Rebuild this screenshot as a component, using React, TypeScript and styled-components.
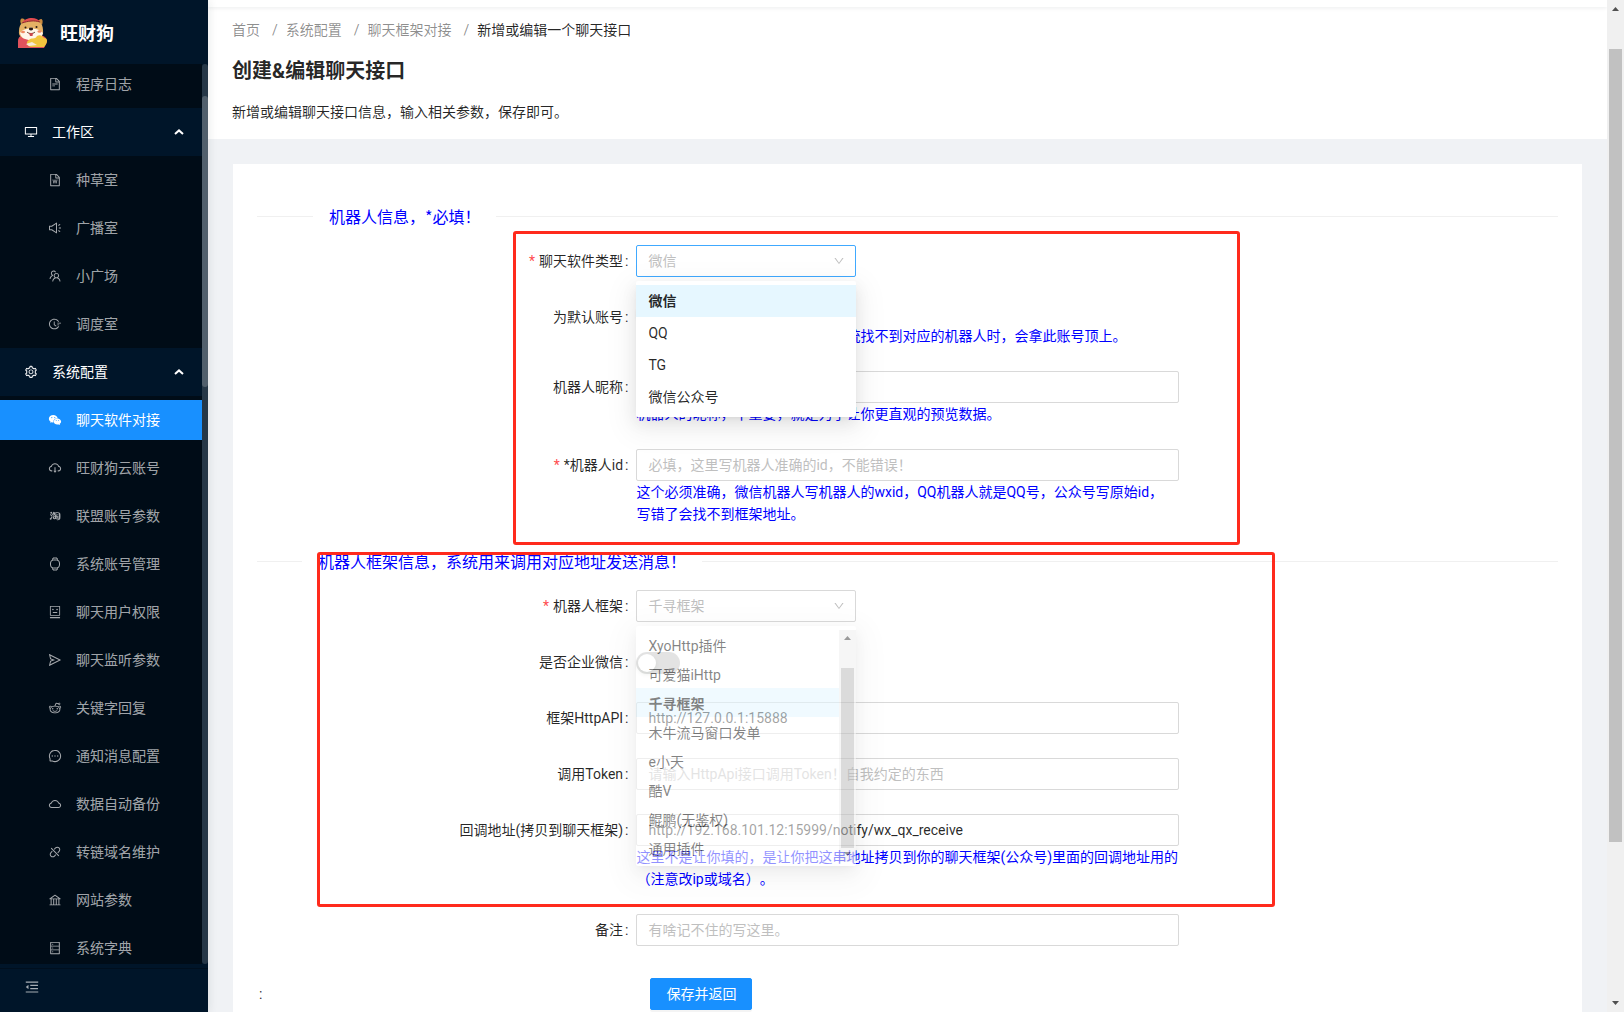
import React from 'react';
import styled, { createGlobalStyle, css } from 'styled-components';
import {
  AiFillWechat,
  AiOutlineBank,
  AiOutlineCloud,
  AiOutlineCloudDownload,
  AiOutlineDatabase,
  AiOutlineDesktop,
  AiOutlineDisconnect,
  AiOutlineDown,
  AiOutlineFieldTime,
  AiOutlineFileText,
  AiOutlineFileWord,
  AiOutlineMenuFold,
  AiOutlineMessage,
  AiOutlineReddit,
  AiOutlineRobot,
  AiOutlineSend,
  AiOutlineSetting,
  AiOutlineSound,
  AiOutlineTaobao,
  AiOutlineTeam,
} from 'react-icons/ai';

const headingFont = '"Noto Sans CJK SC", sans-serif';

const GlobalStyle = createGlobalStyle`
  *, *::before, *::after { box-sizing: border-box; }
  body {
    margin: 0;
    background: #f0f2f5;
    color: rgba(0, 0, 0, 0.85);
    font-family: Roboto, "Noto Sans CJK SC", sans-serif;
    font-size: 14px;
    line-height: 22px;
    text-spacing-trim: space-all;
  }
  button, input, select { font: inherit; }
  h1, p, ul, ol { margin: 0; padding: 0; }
  ul, ol { list-style: none; }
`;

const Shell = styled.div`
  display: flex;
  height: 100vh;
  overflow: hidden;
`;

/* ---------- sidebar ---------- */

const Sider = styled.aside`
  position: relative;
  z-index: 10;
  flex: none;
  display: flex;
  flex-direction: column;
  width: 208px;
  background: #001529;
  box-shadow: 2px 0 8px rgba(29, 35, 41, 0.08);
`;

const Brand = styled.a`
  flex: none;
  display: flex;
  align-items: center;
  gap: 12px;
  height: 64px;
  padding-left: 17px;
  color: #fff;
  font-family: ${headingFont};
  font-size: 18px;
  font-weight: 700;
  text-decoration: none;
`;

const MenuArea = styled.div`
  flex: 1;
  min-height: 0;
  display: flex;
`;

const MenuNav = styled.nav`
  flex: 1;
  overflow: hidden;
  background: #000c17;
`;

const MenuTrack = styled.div`
  width: 6px;
  padding-top: 32px;
  border-radius: 3px;
  background: #263747;
`;

const MenuThumb = styled.div`
  height: 291px;
  border-radius: 3px;
  background: #515f6c;
`;

const GroupButton = styled.button`
  display: flex;
  align-items: center;
  gap: 14px;
  width: 100%;
  height: 48px;
  padding: 0 18px 0 24px;
  border: 0;
  background: #001529;
  color: #fff;
  text-align: left;
  span { flex: 1; }
`;

const MenuList = styled.ul<{ $first?: boolean }>`
  display: flex;
  flex-direction: column;
  gap: 8px;
  padding: ${(p) => (p.$first ? '0' : '4px')} 0 4px;
`;

const MenuLink = styled.a<{ $active?: boolean }>`
  display: flex;
  align-items: center;
  gap: 14px;
  height: 40px;
  padding-left: 48px;
  text-decoration: none;
  color: rgba(255, 255, 255, 0.65);
  ${(p) => p.$active && css`
    background: #1890ff;
    color: #fff;
  `}
`;

const SiderFooter = styled.div`
  flex: none;
  height: 48px;
  padding-top: 4px;
`;

const FoldButton = styled.button`
  display: flex;
  align-items: center;
  width: 100%;
  height: 44px;
  padding: 0 24px 8px;
  border: 0;
  border-top: 1px solid #000f1e;
  background: transparent;
  color: rgba(255, 255, 255, 0.65);
  font-size: 16px;
`;

/* ---------- page ---------- */

const Main = styled.main`
  flex: 1;
  min-width: 0;
  overflow: hidden;
`;

const TopBar = styled.div`
  position: relative;
  height: 7px;
  background: #fff;
  box-shadow: 0 1px 4px rgba(0, 21, 41, 0.08);
`;

const PageHeader = styled.header`
  padding: 12px 24px 16px;
  background: #fff;
`;

const Crumbs = styled.ol`
  display: flex;
  color: rgba(0, 0, 0, 0.45);
  li + li::before {
    content: '/';
    margin: 0 8px 0 12px;
  }
  a { color: inherit; text-decoration: none; }
  li:last-child span { color: rgba(0, 0, 0, 0.85); }
`;

const Title = styled.h1`
  margin: 14px 0;
  font-size: 20px;
  line-height: 32px;
  font-weight: 700;
`;

const Card = styled.form`
  position: relative;
  margin: 25px 25px 0;
  padding: 24px;
  background: #fff;
`;

const SectionTitle = styled.div<{ $lead: number }>`
  display: flex;
  align-items: center;
  gap: 16px;
  margin: 16px 0;
  color: #0000ff;
  font-family: ${headingFont};
  font-size: 16px;
  line-height: 25px;
  &::before, &::after {
    content: '';
    height: 1px;
    background: #f0f0f0;
  }
  &::before { width: ${(p) => p.$lead}px; }
  &::after { flex: 1; }
`;

const Row = styled.div`
  display: grid;
  grid-template-columns: minmax(0, 7fr) minmax(0, 10fr) minmax(0, 7fr);
  margin-bottom: 24px;
`;

const Rows = styled.div`
  display: flow-root;
  & + ${SectionTitle} { margin-top: 0; }
`;

const Label = styled.label<{ $required?: boolean }>`
  display: block;
  height: 32px;
  padding-right: 8px;
  line-height: 32px;
  text-align: right;
  white-space: nowrap;
  &::after { content: ':'; margin-left: 2px; }
  ${(p) => p.$required && css`
    &::before {
      content: '*';
      margin-right: 4px;
      color: #ff4d4f;
    }
  `}
`;

const Control = styled.div<{ $width?: string }>`
  position: relative;
  width: ${(p) => p.$width ?? '100%'};
`;

const TextInput = styled.input`
  display: block;
  width: 100%;
  height: 32px;
  padding: 4px 11px;
  border: 1px solid #d9d9d9;
  border-radius: 2px;
  outline: 0;
  background: #fff;
  color: rgba(0, 0, 0, 0.85);
  &::placeholder { color: #bfbfbf; opacity: 1; }
`;

const SelectBox = styled.select<{ $focused?: boolean }>`
  display: block;
  width: 100%;
  height: 32px;
  padding: 0 11px;
  appearance: none;
  border: 1px solid ${(p) => (p.$focused ? '#40a9ff' : '#d9d9d9')};
  border-radius: 2px;
  outline: 0;
  background: #fff;
  color: #bfbfbf;
`;

const Caret = styled(AiOutlineDown)`
  position: absolute;
  top: 10px;
  right: 11px;
  color: #bfbfbf;
  font-size: 12px;
  pointer-events: none;
`;

const Help = styled.p`
  color: #0000ff;
`;

const SwitchLine = styled.div<{ $compact?: boolean }>`
  display: flex;
  align-items: center;
  height: ${(p) => (p.$compact ? '24px' : '34px')};
  margin-bottom: ${(p) => (p.$compact ? '0' : '-2px')};
`;

const Switch = styled.input`
  appearance: none;
  display: flex;
  align-items: center;
  width: 44px;
  height: 22px;
  margin: 0;
  padding: 2px;
  border-radius: 11px;
  background: rgba(0, 0, 0, 0.25);
  &::before {
    content: '';
    width: 18px;
    height: 18px;
    border-radius: 9px;
    background: #fff;
    box-shadow: 0 2px 4px rgba(0, 35, 11, 0.2);
  }
`;

const Popup = styled.div<{ $fading?: boolean }>`
  position: absolute;
  z-index: 5;
  top: 36px;
  left: 0;
  display: flex;
  width: 100%;
  padding: 4px 0;
  border-radius: 2px;
  background: #fff;
  opacity: ${(p) => (p.$fading ? 0.57 : 1)};
  box-shadow: 0 3px 6px -4px rgba(0, 0, 0, 0.12), 0 6px 16px 0 rgba(0, 0, 0, 0.08),
    0 9px 28px 8px rgba(0, 0, 0, 0.05);
`;

const OptionList = styled.ul`
  flex: 1;
`;

const OptionItem = styled.li<{ $dense?: boolean }>`
  height: ${(p) => (p.$dense ? '29px' : '32px')};
  padding: 0 12px;
  line-height: 32px;
  &[aria-selected='true'] {
    background: #e6f7ff;
    font-weight: 700;
  }
`;

const ScrollTrack = styled.div<{ $pad: number }>`
  flex: none;
  display: flex;
  flex-direction: column;
  justify-content: space-between;
  align-items: center;
  width: 17px;
  padding: ${(p) => p.$pad}px 0;
  background: #f0f0f0;
`;

const ScrollThumb = styled.div<{ $before: number; $after: number }>`
  flex: 1;
  width: 13px;
  margin: ${(p) => p.$before}px 0 ${(p) => p.$after}px;
  background: #c1c1c1;
`;

const SubmitRow = styled.div`
  display: grid;
  grid-template-columns: minmax(0, 7fr) minmax(0, 17fr);
  align-items: center;
  padding: 8px 0 24px;
`;

const SubmitLabel = styled.span`
  padding-left: 2px;
`;

const SubmitButton = styled.button`
  height: 32px;
  margin-left: 14px;
  padding: 0 15px;
  border: 1px solid #1890ff;
  border-radius: 2px;
  background: #1890ff;
  color: #fff;
  box-shadow: 0 2px 0 rgba(0, 0, 0, 0.045);
`;

const Marker = styled.div<{ $x: number; $y: number; $w: number; $h: number }>`
  position: absolute;
  z-index: 6;
  left: ${(p) => p.$x}px;
  top: ${(p) => p.$y}px;
  width: ${(p) => p.$w}px;
  height: ${(p) => p.$h}px;
  border: 3px solid #ff2a1c;
  border-radius: 3px;
  pointer-events: none;
`;

/* ---------- drawings ---------- */

const DogLogo = () => (
  <svg width="31" height="33" viewBox="0 0 31 33" aria-hidden="true">
    <path d="M4 8 C2 3 5 1 8 4 Z M21 5 C24 1 27 3 25 9 Z" fill="#c98a3f" />
    <path d="M1 32 V25 C1 21 4 19 8 19 H22 C27 19 30 22 30 26 L27 32 Z" fill="#e0525c" />
    <path d="M2 15 C2 7 8 3 14 3 C21 3 26 7 26 14 C27 20 22 23 14 23 C6 23 1 21 2 15 Z" fill="#e5b164" />
    <path d="M3 17 C6 12 11 14 14 11 C17 14 22 12 26 17 C25 22 20 24 14 24 C8 24 4 22 3 17 Z" fill="#fff6ea" />
    <path d="M5 7 C8 1 20 0 23 6 C17 4 11 5 5 7 Z" fill="#e24b50" />
    <path d="M5 7 C11 5 17 4 23 6" fill="none" stroke="#8d2d2d" strokeWidth="1" />
    <circle cx="8.5" cy="11.5" r="1" fill="#2b1a14" />
    <circle cx="19.5" cy="11" r="1" fill="#2b1a14" />
    <ellipse cx="6" cy="16" rx="2" ry="1.2" fill="#f08a63" />
    <ellipse cx="22.5" cy="15.5" rx="2" ry="1.2" fill="#f08a63" />
    <ellipse cx="14" cy="13" rx="2.2" ry="1.4" fill="#2b1a14" />
    <path d="M10 16 C12 18 16 18 18 16" fill="none" stroke="#5a3a2a" strokeWidth="1" />
    <path d="M12 17 H16 L15.5 20 H13 Z" fill="#c9484c" />
    <path d="M12 24 C14 21 18 24 20 20 C23 18 26 20 27 22 C32 22 30 28 27 31 H14 C9 30 9 25 12 24 Z" fill="#f2c53d" />
    <path d="M9 28 L15 26 L20 29 L12 30 Z" fill="#f7ead8" />
  </svg>
);

const WatchIcon = () => (
  <svg width="14" height="14" viewBox="0 0 14 14" fill="none" stroke="currentColor" aria-hidden="true">
    <rect x="2.5" y="3" width="9" height="8" rx="3" />
    <path d="M4.5 2.8 L5 1 H9 L9.5 2.8 M4.5 11.2 L5 13 H9 L9.5 11.2" />
  </svg>
);

const ChevronUp = () => (
  <svg width="10" height="6" viewBox="0 0 10 6" fill="none" stroke="currentColor" strokeWidth="2" aria-hidden="true">
    <path d="M1 5 L5 1.4 L9 5" />
  </svg>
);

const ScrollArrow = ({ down }: { down?: boolean }) => (
  <svg width="7" height="4" viewBox="0 0 7 4" fill="#505050" aria-hidden="true">
    <path d={down ? 'M0 0 H7 L3.5 4 Z' : 'M0 4 H7 L3.5 0 Z'} />
  </svg>
);

/* ---------- data ---------- */

type Entry = { text: string; icon: React.ReactNode; active?: boolean };

const workEntries: Entry[] = [
  { text: '种草室', icon: <AiOutlineFileWord /> },
  { text: '广播室', icon: <AiOutlineSound /> },
  { text: '小广场', icon: <AiOutlineTeam /> },
  { text: '调度室', icon: <AiOutlineFieldTime /> },
];

const configEntries: Entry[] = [
  { text: '聊天软件对接', icon: <AiFillWechat />, active: true },
  { text: '旺财狗云账号', icon: <AiOutlineCloudDownload /> },
  { text: '联盟账号参数', icon: <AiOutlineTaobao /> },
  { text: '系统账号管理', icon: <WatchIcon /> },
  { text: '聊天用户权限', icon: <AiOutlineRobot /> },
  { text: '聊天监听参数', icon: <AiOutlineSend /> },
  { text: '关键字回复', icon: <AiOutlineReddit /> },
  { text: '通知消息配置', icon: <AiOutlineMessage /> },
  { text: '数据自动备份', icon: <AiOutlineCloud /> },
  { text: '转链域名维护', icon: <AiOutlineDisconnect /> },
  { text: '网站参数', icon: <AiOutlineBank /> },
  { text: '系统字典', icon: <AiOutlineDatabase /> },
];

const chatTypes = ['微信', 'QQ', 'TG', '微信公众号'];

const frameworks = [
  'XyoHttp插件',
  '可爱猫iHttp',
  '千寻框架',
  '木牛流马窗口发单',
  'e小天',
  '酷V',
  '鲲鹏(无鉴权)',
  '通用插件',
];

const Entries = ({ items, first }: { items: Entry[]; first?: boolean }) => (
  <MenuList $first={first}>
    {items.map((item) => (
      <li key={item.text}>
        <MenuLink href="#" $active={item.active}>
          {item.icon}
          {item.text}
        </MenuLink>
      </li>
    ))}
  </MenuList>
);

type PickerProps = { id: string; options: string[]; value: string; focused?: boolean; fading?: boolean };

const Picker = ({ id, options, value, focused, fading }: PickerProps) => (
  <Control $width="220px">
    <SelectBox id={id} defaultValue={value} $focused={focused}>
      {options.map((o) => (
        <option key={o}>{o}</option>
      ))}
    </SelectBox>
    <Caret />
    <Popup $fading={fading}>
      <OptionList role="listbox">
        {options.map((o) => (
          <OptionItem key={o} role="option" aria-selected={o === value} $dense={fading}>
            {o}
          </OptionItem>
        ))}
      </OptionList>
      {fading && (
        <ScrollTrack $pad={6}>
          <ScrollArrow />
          <ScrollThumb $before={28} $after={4} />
          <ScrollArrow down />
        </ScrollTrack>
      )}
    </Popup>
  </Control>
);

export default function App() {
  return (
    <>
      <GlobalStyle />
      <Shell>
        <Sider>
          <Brand href="#">
            <DogLogo />
            旺财狗
          </Brand>
          <MenuArea>
            <MenuNav>
              <Entries first items={[{ text: '程序日志', icon: <AiOutlineFileText /> }]} />
              <GroupButton type="button">
                <AiOutlineDesktop />
                <span>工作区</span>
                <ChevronUp />
              </GroupButton>
              <Entries items={workEntries} />
              <GroupButton type="button">
                <AiOutlineSetting />
                <span>系统配置</span>
                <ChevronUp />
              </GroupButton>
              <Entries items={configEntries} />
            </MenuNav>
            <MenuTrack>
              <MenuThumb />
            </MenuTrack>
          </MenuArea>
          <SiderFooter>
            <FoldButton type="button" aria-label="收起菜单">
              <AiOutlineMenuFold />
            </FoldButton>
          </SiderFooter>
        </Sider>

        <Main>
          <TopBar />
          <PageHeader>
            <Crumbs>
              <li><a href="#">首页</a></li>
              <li><a href="#">系统配置</a></li>
              <li><a href="#">聊天框架对接</a></li>
              <li><span>新增或编辑一个聊天接口</span></li>
            </Crumbs>
            <Title>创建&amp;编辑聊天接口</Title>
            <p>新增或编辑聊天接口信息，输入相关参数，保存即可。</p>
          </PageHeader>

          <Card onSubmit={(e) => e.preventDefault()}>
            <SectionTitle $lead={56}>机器人信息，*必填！</SectionTitle>
            <Rows>
              <Row>
                <Label htmlFor="type" $required>聊天软件类型</Label>
                <Picker id="type" options={chatTypes} value="微信" focused />
              </Row>
              <Row>
                <Label htmlFor="fallback">为默认账号</Label>
                <Control>
                  <SwitchLine $compact>
                    <Switch type="checkbox" role="switch" id="fallback" />
                  </SwitchLine>
                  <Help>是否设置为默认账号，如果当前系统找不到对应的机器人时，会拿此账号顶上。</Help>
                </Control>
              </Row>
              <Row>
                <Label htmlFor="nick">机器人昵称</Label>
                <Control>
                  <TextInput id="nick" />
                  <Help>机器人的昵称，不重要，就是为了让你更直观的预览数据。</Help>
                </Control>
              </Row>
              <Row>
                <Label htmlFor="robot" $required>*机器人id</Label>
                <Control>
                  <TextInput id="robot" placeholder="必填，这里写机器人准确的id，不能错误！" />
                  <Help>
                    这个必须准确，微信机器人写机器人的wxid，QQ机器人就是QQ号，公众号写原始id，
                    <br />
                    写错了会找不到框架地址。
                  </Help>
                </Control>
              </Row>
            </Rows>

            <SectionTitle $lead={45}>机器人框架信息，系统用来调用对应地址发送消息！</SectionTitle>
            <Rows>
              <Row>
                <Label htmlFor="framework" $required>机器人框架</Label>
                <Picker id="framework" options={frameworks} value="千寻框架" fading />
              </Row>
              <Row>
                <Label htmlFor="corp">是否企业微信</Label>
                <Control>
                  <SwitchLine>
                    <Switch type="checkbox" role="switch" id="corp" />
                  </SwitchLine>
                </Control>
              </Row>
              <Row>
                <Label htmlFor="api">框架HttpAPI</Label>
                <TextInput id="api" defaultValue="http://127.0.0.1:15888" />
              </Row>
              <Row>
                <Label htmlFor="token">调用Token</Label>
                <TextInput id="token" placeholder="请输入HttpApi接口调用Token！自我约定的东西" />
              </Row>
              <Row>
                <Label htmlFor="callback">回调地址(拷贝到聊天框架)</Label>
                <Control>
                  <TextInput id="callback" defaultValue="http://192.168.101.12:15999/notify/wx_qx_receive" />
                  <Help>这里不是让你填的，是让你把这串地址拷贝到你的聊天框架(公众号)里面的回调地址用的（注意改ip或域名）。</Help>
                </Control>
              </Row>
              <Row>
                <Label htmlFor="remark">备注</Label>
                <TextInput id="remark" placeholder="有啥记不住的写这里。" />
              </Row>
            </Rows>

            <SubmitRow>
              <SubmitLabel>:</SubmitLabel>
              <div>
                <SubmitButton type="submit">保存并返回</SubmitButton>
              </div>
            </SubmitRow>

            <Marker $x={280} $y={67} $w={727} $h={314} />
            <Marker $x={84} $y={388} $w={958} $h={355} />
          </Card>
        </Main>

        <ScrollTrack $pad={7} aria-hidden="true">
          <ScrollArrow />
          <ScrollThumb $before={38} $after={159} />
          <ScrollArrow down />
        </ScrollTrack>
      </Shell>
    </>
  );
}
